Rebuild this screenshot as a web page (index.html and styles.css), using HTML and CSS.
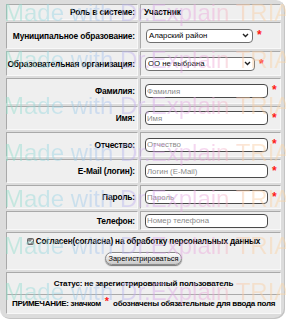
FILE: index.html
```html
<!DOCTYPE html>
<html>
<head>
<meta charset="utf-8">
<link rel="stylesheet" href="styles.css">
</head>
<body>
<div class="frame">
  <div class="grid">
    <div class="cell label r1">Роль в системе:</div>
    <div class="cell value r1"><b>Участник</b></div>

    <div class="cell label r2">Муниципальное образование:</div>
    <div class="cell value r2"><div class="select s1"><span>Аларский район</span><svg class="chev" width="7" height="5" viewBox="0 0 7 5"><path d="M1 1 L3.5 3.5 L6 1" fill="none" stroke="#222" stroke-width="1.4"/></svg></div><span class="req">*</span></div>

    <div class="cell label r3">Образовательная организация:</div>
    <div class="cell value r3"><div class="select s2"><span>ОО не выбрана</span><svg class="chev" width="7" height="5" viewBox="0 0 7 5"><path d="M1 1 L3.5 3.5 L6 1" fill="none" stroke="#222" stroke-width="1.4"/></svg></div><span class="req">*</span></div>

    <div class="cell label r4">Фамилия:</div>
    <div class="cell value r4"><input class="field" placeholder="Фамилия"><span class="req">*</span></div>

    <div class="cell label r5">Имя:</div>
    <div class="cell value r5"><input class="field" placeholder="Имя"><span class="req">*</span></div>

    <div class="cell label r6">Отчество:</div>
    <div class="cell value r6"><input class="field" placeholder="Отчество"><span class="req">*</span></div>

    <div class="cell label r7">E-Mail (логин):</div>
    <div class="cell value r7"><input class="field" placeholder="Логин (E-Mail)"><span class="req">*</span></div>

    <div class="cell label r8">Пароль:</div>
    <div class="cell value r8"><input class="field" placeholder="Пароль"><span class="req">*</span></div>

    <div class="cell label r9">Телефон:</div>
    <div class="cell value r9"><input class="field" placeholder="Номер телефона"></div>

    <div class="cell wide r10">
      <div class="agree"><svg class="cb" width="7" height="7" viewBox="0 0 7 7"><rect x="0.5" y="0.5" width="6" height="6" rx="1" fill="#8a8a8a" stroke="#666"/><path d="M1.5 3.6 L2.9 5 L5.6 1.8" fill="none" stroke="#fff" stroke-width="1.1"/></svg>Согласен(согласна) на обработку персональных данных</div>
      <div class="btn">Зарегистрироваться</div>
    </div>

    <div class="cell wide r11">
      <div class="status">Статус: не зарегистрированный пользователь</div>
      <div class="rule"></div>
      <div class="note">ПРИМЕЧАНИЕ: значком <span class="req small">*</span> обозначены обязательные для ввода поля</div>
    </div>
  </div>
</div>
<div class="watermark">
  <div class="wm">Made with Dr.Explain TRIAL</div>
  <div class="wm">Made with Dr.Explain TRIAL</div>
  <div class="wm">Made with Dr.Explain TRIAL</div>
  <div class="wm">Made with Dr.Explain TRIAL</div>
  <div class="wm">Made with Dr.Explain TRIAL</div>
  <div class="wm">Made with Dr.Explain TRIAL</div>
  <div class="wm">Made with Dr.Explain TRIAL</div>
</div>
</body>
</html>
```

FILE: styles.css
```css
html, body {
  margin: 0;
  padding: 0;
  background: #fff;
  width: 286px;
  height: 325px;
  overflow: hidden;
  font-family: "Liberation Sans", Arial, sans-serif;
  color: #000;
}
.frame {
  width: 274px;
  padding: 4px 5px 5px 6px;
  background: #dcdcdc;
  border-radius: 0 9px 10px 10px;
  box-shadow: inset -1px -1px 0 #c4c4c4;
}
.grid {
  display: grid;
  grid-template-columns: 132px 141px;
  column-gap: 2px;
  row-gap: 2px;
}
.cell {
  box-sizing: border-box;
  background: #efefef;
  border: 1px solid;
  border-color: #a9a9a9 #f8f8f8 #f8f8f8 #a9a9a9;
  font-size: 8px;
  letter-spacing: -0.2px;
  display: flex;
  align-items: center;
  white-space: nowrap;
}
.label {
  justify-content: flex-end;
  font-weight: bold;
  padding-right: 2px;
  font-size: 8.4px;
  letter-spacing: -0.15px;
}
.value {
  padding-left: 4px;
}
.value b { margin-left: -1px; font-size: 8.4px; letter-spacing: -0.15px; }
.wide {
  grid-column: 1 / 3;
  flex-direction: column;
  justify-content: flex-start;
  font-weight: bold;
}
.r1 { height: 16px; }
.r2 { height: 27px; }
.r3 { height: 25px; }
.r4 { height: 26px; }
.r5 { height: 24px; }
.r6 { height: 25px; }
.r7 { height: 24px; }
.r8 { height: 24px; }
.r9 { height: 19px; }
.r10 { height: 38px; }
.r11 { height: 42px; }

.select {
  box-sizing: border-box;
  height: 14px;
  border: 1px solid #6f6f6f;
  border-radius: 4px;
  background: #fff;
  display: flex;
  align-items: center;
  justify-content: space-between;
  padding: 0 3px 0 2px;
  font-size: 7.8px;
  letter-spacing: 0;
  font-weight: normal;
}
.s1 { width: 107px; margin-left: 1px; }
.s2 { width: 110px; margin-left: 0; }
.chev { display: block; }
.req {
  color: #ff1a1a;
  font-weight: bold;
  font-size: 12px;
  line-height: 1;
  margin-left: 4px;
  align-self: flex-start;
  margin-top: 6px;
  letter-spacing: 0;
}
.field {
  box-sizing: border-box;
  width: 123px;
  height: 14px;
  border: 1.3px solid #4a4a4a;
  border-radius: 4px;
  background: #fff;
  padding: 0 1px;
  font-family: "Liberation Sans", Arial, sans-serif;
  font-size: 7.8px;
  outline: none;
  margin: 0;
}
.field::placeholder { color: #8a8a8a; }
.r4 .req, .r5 .req, .r6 .req, .r7 .req, .r8 .req { margin-top: 5px; }

.agree {
  display: flex;
  align-items: center;
  gap: 1px;
  margin-top: 4px;
  font-size: 8.2px;
  letter-spacing: -0.15px;
}
.cb { display: block; margin-right: 1px; }
.btn {
  margin-top: 6px;
  box-sizing: border-box;
  width: 77px;
  height: 13px;
  border: 1px solid #8a8a8a;
  border-radius: 7px;
  background: linear-gradient(#ffffff, #dedede 60%, #c8c8c8);
  box-shadow: 0 1px 1px #777;
  font-size: 7.4px;
  letter-spacing: 0;
  font-weight: normal;
  display: flex;
  align-items: center;
  justify-content: center;
}
.status {
  margin-top: 6px;
  letter-spacing: -0.15px;
}
.rule {
  align-self: stretch;
  height: 0;
  border-top: 1px solid #aaa;
  margin: 6px 0 0 0;
}
.note {
  margin-top: 4px;
  display: flex;
  align-items: flex-start;
  white-space: pre;
  letter-spacing: -0.28px;
}
.req.small {
  font-size: 11px;
  margin: -3px 2px 0 2px;
}

.watermark {
  position: absolute;
  left: 0;
  top: 0;
  width: 286px;
  height: 325px;
  pointer-events: none;
  overflow: hidden;
}
.wm {
  height: 46.5px;
  line-height: 26px;
  font-family: "Liberation Sans", Arial, sans-serif;
  font-size: 24px;
  white-space: nowrap;
  padding-left: 4px;
  background: linear-gradient(90deg, #8fe0c4 0px, #9ad6e6 55px, #a8bff0 110px, #d7a8ee 150px, #f0a8d8 215px, #f9caa0 245px, #fbd8a8 290px);
  -webkit-background-clip: text;
  background-clip: text;
  color: transparent;
  opacity: 0.45;
}
```
